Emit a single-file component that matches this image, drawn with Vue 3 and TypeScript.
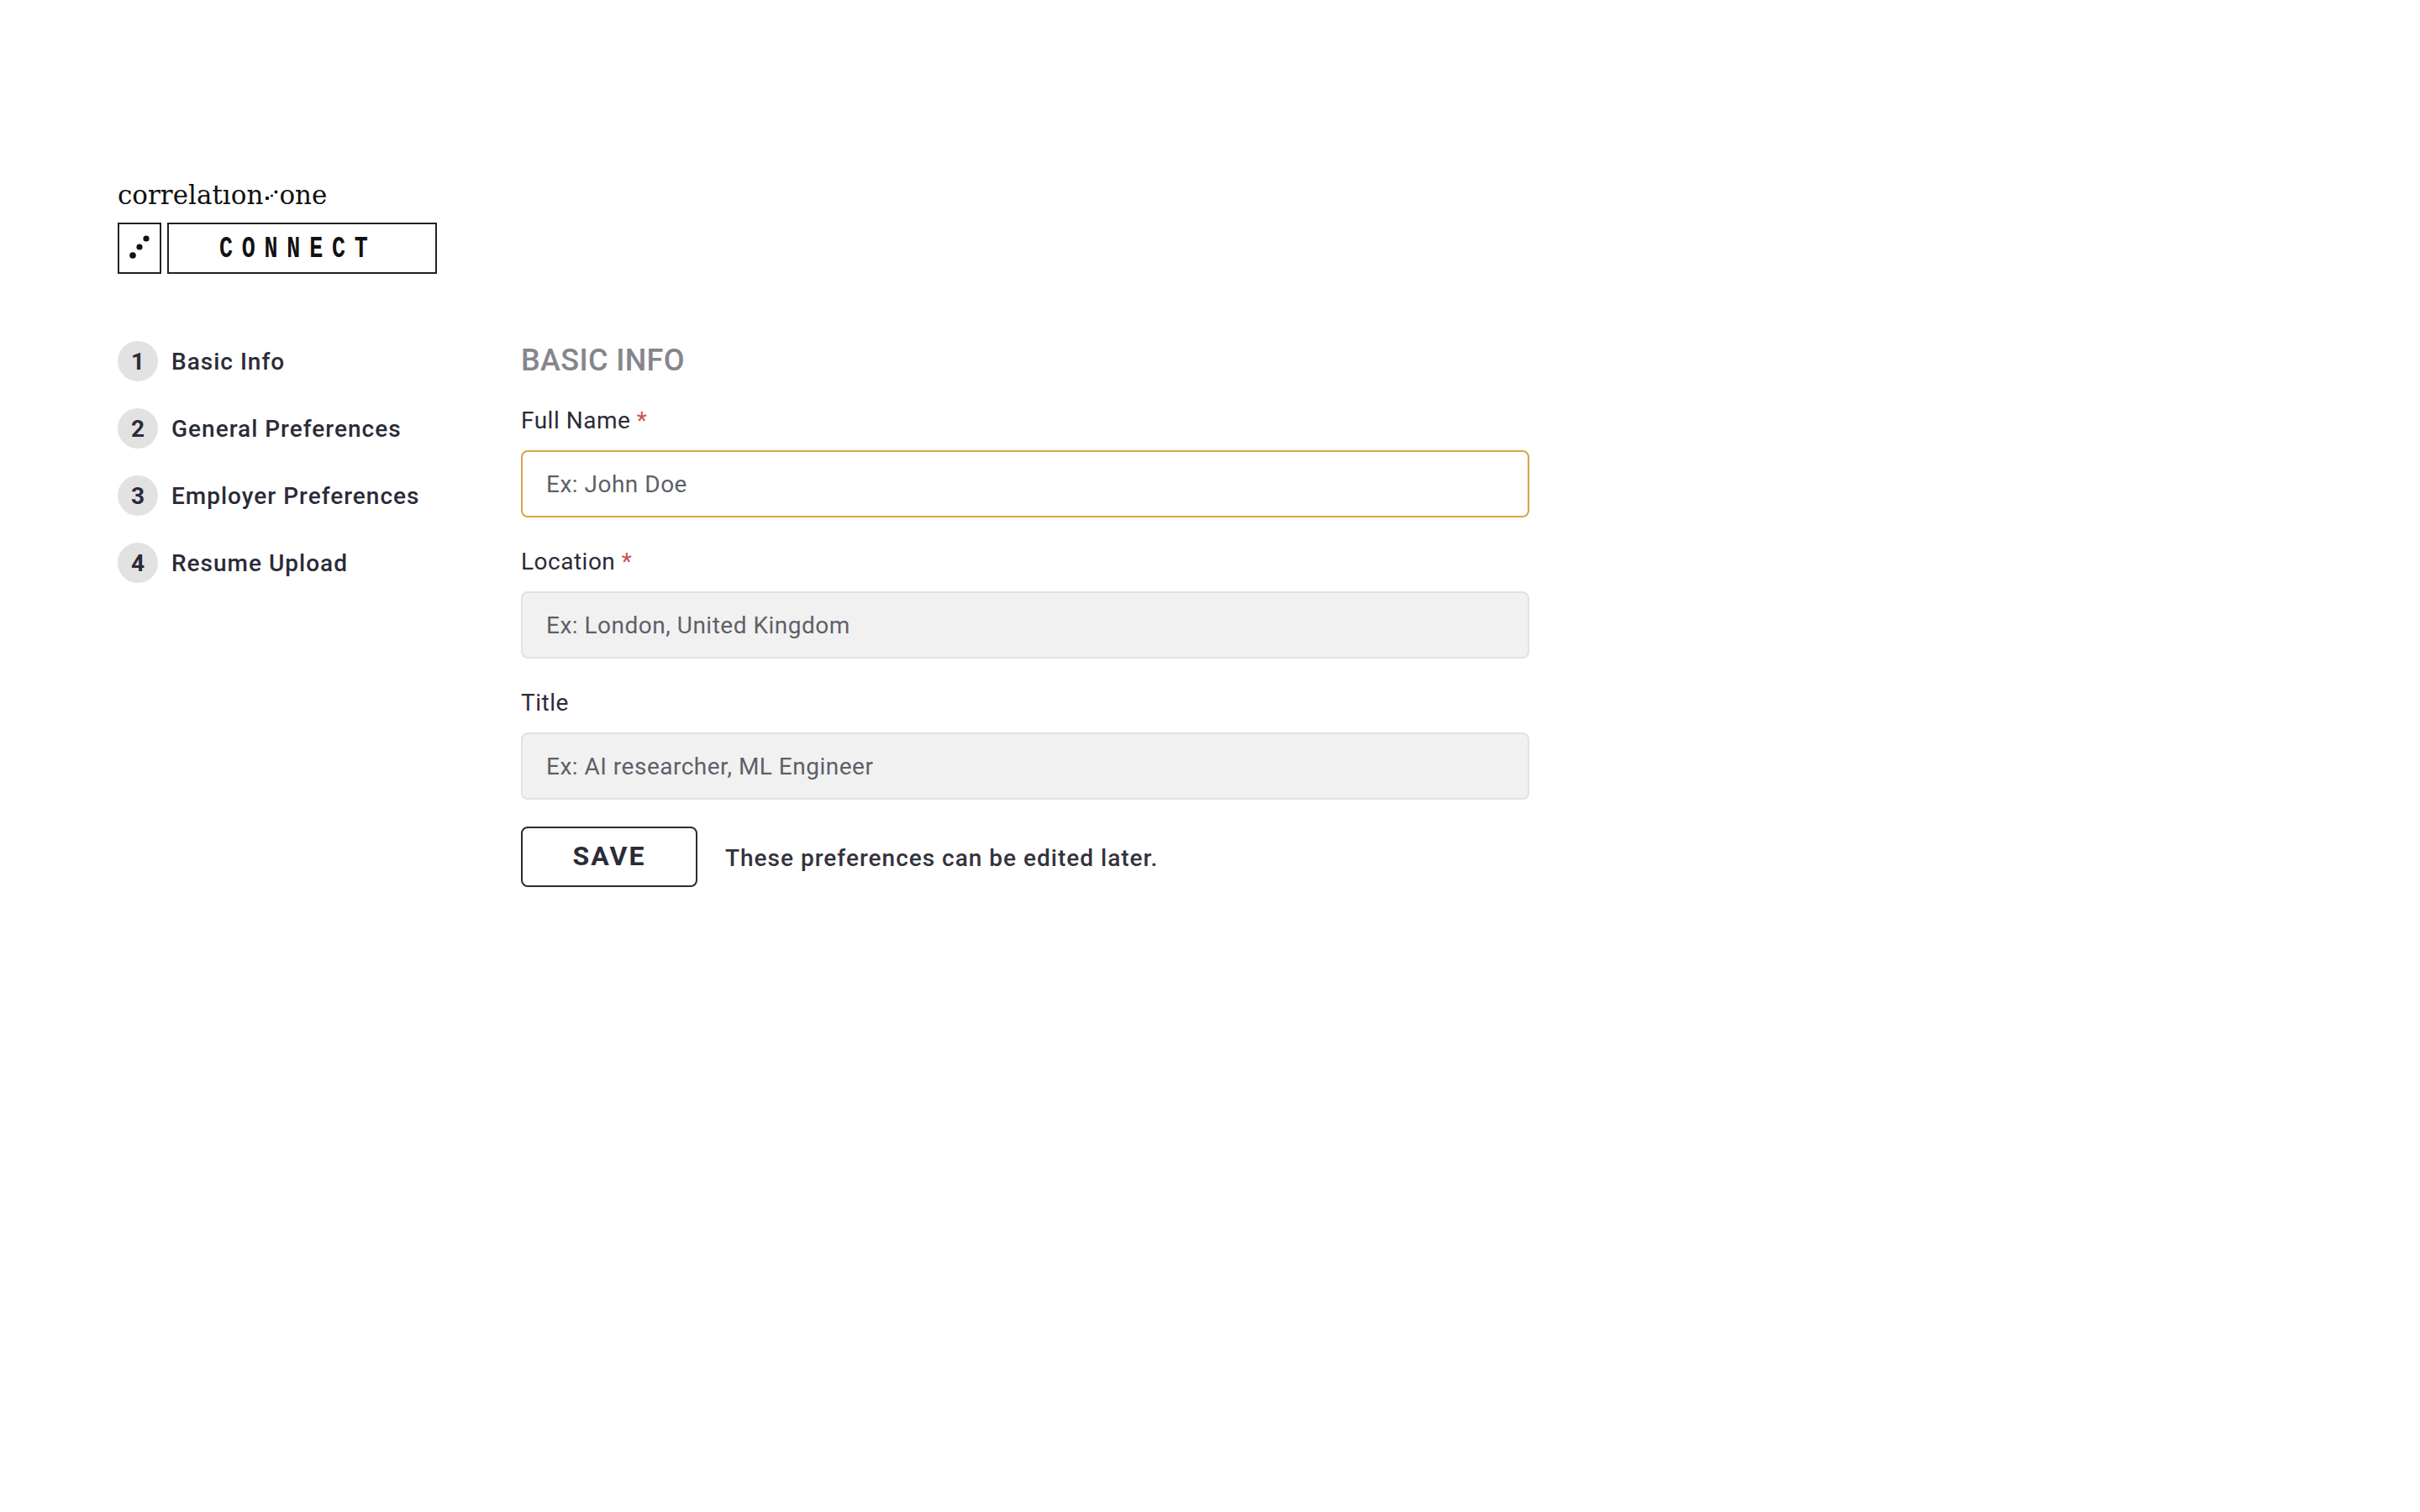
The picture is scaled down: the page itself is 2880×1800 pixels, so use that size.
<script setup lang="ts">
const steps: string[] = ['Basic Info', 'General Preferences', 'Employer Preferences', 'Resume Upload']
const fields = [
  { label: 'Full Name', required: true, placeholder: 'Ex: John Doe', active: true },
  { label: 'Location', required: true, placeholder: 'Ex: London, United Kingdom', active: false },
  { label: 'Title', required: false, placeholder: 'Ex: AI researcher, ML Engineer', active: false },
]
</script>

<template>
  <div class="page">
    <header class="brand">
      <div class="wordmark">
        <span>correlatıon</span>
        <svg class="wm-dots" width="16" height="16" viewBox="0 0 16 16">
          <circle cx="3" cy="11" r="2.3" fill="#111" />
          <circle cx="8.5" cy="8" r="1.5" fill="#111" />
          <circle cx="13.5" cy="3.5" r="2" fill="#111" />
        </svg>
        <span>one</span>
      </div>
      <div class="boxes">
        <div class="box-icon">
          <svg width="48" height="57" viewBox="0 0 48 57">
            <circle cx="16" cy="37" r="3.8" fill="#111" />
            <circle cx="24" cy="27" r="3.6" fill="#111" />
            <circle cx="32" cy="17" r="3.6" fill="#111" />
          </svg>
        </div>
        <div class="box-text"><span class="connect">CONNECT</span></div>
      </div>
    </header>

    <div class="body">
      <nav class="steps">
        <div v-for="(s, i) in steps" :key="s" class="step">
          <span class="num">{{ i + 1 }}</span>
          <span class="step-label">{{ s }}</span>
        </div>
      </nav>

      <main class="form">
        <h1 class="heading">BASIC INFO</h1>
        <div v-for="f in fields" :key="f.label" class="field">
          <label class="label">{{ f.label }}<span v-if="f.required" class="req"> *</span></label>
          <input class="input" :class="{ active: f.active }" :placeholder="f.placeholder" type="text" />
        </div>
        <div class="actions">
          <button class="save" type="button">SAVE</button>
          <span class="note">These preferences can be edited later.</span>
        </div>
      </main>
    </div>
  </div>
</template>

<style>
html, body { margin: 0; background: #fff; }
</style>

<style scoped>
.page {
  box-sizing: border-box;
  width: 2880px;
  height: 1800px;
  padding: 212px 0 0 140px;
  font-family: Roboto, "Liberation Sans", sans-serif;
  color: #2b2b38;
  background: #fff;
}
.wordmark {
  display: flex;
  align-items: center;
  height: 40px;
  font-family: "DejaVu Serif", serif;
  font-size: 31px;
  color: #111;
}
.wm-dots { margin: 2px 1px 0 2px; }
.boxes {
  display: flex;
  gap: 7px;
  margin-top: 13px;
  height: 61px;
}
.box-icon, .box-text {
  box-sizing: border-box;
  border: 2px solid #222;
  height: 61px;
}
.box-icon { width: 52px; }
.box-text {
  width: 321px;
  display: flex;
  align-items: center;
  padding-left: 60px;
  color: #111;
}
.connect {
  display: inline-block;
  font-family: "Liberation Mono", monospace;
  font-size: 37px;
  font-weight: 700;
  letter-spacing: 15px;
  transform: scaleX(0.72);
  transform-origin: left center;
}
.body {
  display: flex;
  margin-top: 80px;
}
.steps {
  width: 480px;
  display: flex;
  flex-direction: column;
  gap: 32px;
}
.step {
  display: flex;
  align-items: center;
  gap: 16px;
  height: 48px;
}
.num {
  width: 48px;
  height: 48px;
  border-radius: 50%;
  background: #e2e2e2;
  display: flex;
  align-items: center;
  justify-content: center;
  font-size: 28px;
  font-weight: 700;
}
.step-label {
  font-size: 28px;
  font-weight: 500;
  letter-spacing: 1px;
}
.form { width: 1200px; }
.heading {
  margin: 0;
  padding-top: 1px;
  font-size: 36px;
  font-weight: 500;
  line-height: 44px;
  letter-spacing: 0.35px;
  color: #85858c;
}
.field { margin-top: 32px; }
.field + .field { margin-top: 35px; }
.label {
  display: block;
  font-size: 28px;
  line-height: 36px;
  letter-spacing: 0.5px;
  margin-bottom: 17px;
}
.req { color: #c9504f; }
.input {
  display: block;
  box-sizing: border-box;
  width: 100%;
  height: 80px;
  padding: 0 28px;
  border: 2px solid #e2e2e2;
  border-radius: 8px;
  background: #f1f1f1;
  font-family: inherit;
  font-size: 28px;
  letter-spacing: 0.5px;
  outline: none;
}
.input::placeholder { color: #5f5f69; opacity: 1; }
.input.active {
  background: #fff;
  border-color: #d9a441;
}
.actions {
  display: flex;
  align-items: center;
  gap: 33px;
  margin-top: 32px;
}
.save {
  box-sizing: border-box;
  width: 210px;
  height: 72px;
  padding: 0 0 2px;
  border: 2px solid #2b2b38;
  border-radius: 8px;
  background: #fff;
  color: #2b2b38;
  font-family: inherit;
  font-size: 32px;
  font-weight: 700;
  letter-spacing: 2px;
}
.note {
  margin-top: 2px;
  font-size: 28px;
  font-weight: 500;
  letter-spacing: 1px;
  color: #33333d;
}
</style>
